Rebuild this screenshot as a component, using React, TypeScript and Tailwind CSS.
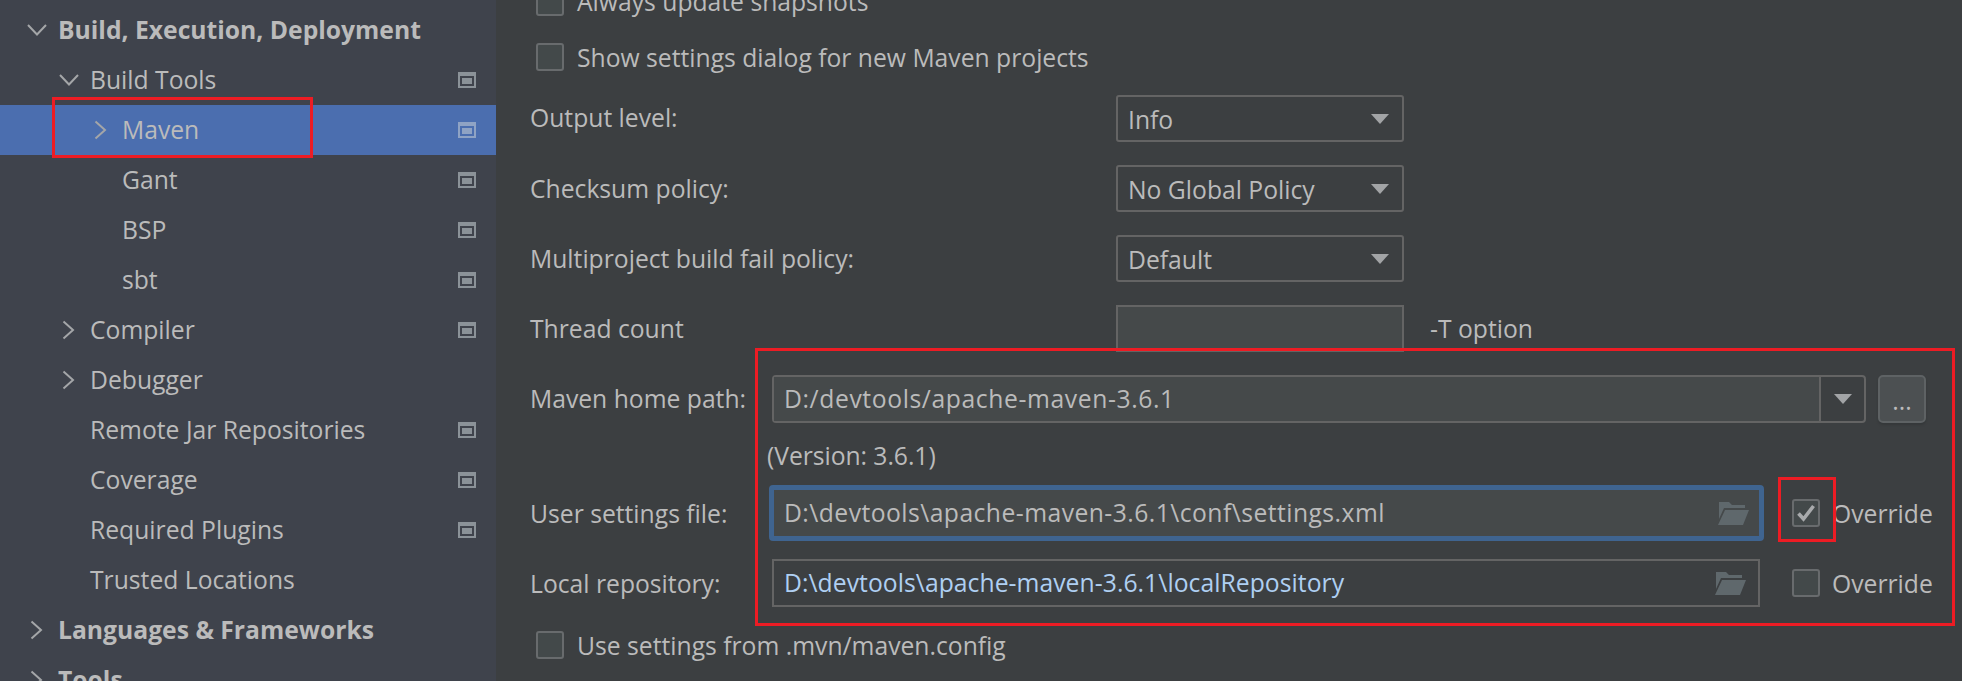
import React from "react";

type TreeRow = {
  label: string;
  level: number;
  bold?: boolean;
  arrow?: "open" | "closed";
  page?: boolean;
  selected?: boolean;
};

const rows: TreeRow[] = [
  { label: "Build, Execution, Deployment", level: 0, bold: true, arrow: "open" },
  { label: "Build Tools", level: 1, arrow: "open", page: true },
  { label: "Maven", level: 2, arrow: "closed", page: true, selected: true },
  { label: "Gant", level: 2, page: true },
  { label: "BSP", level: 2, page: true },
  { label: "sbt", level: 2, page: true },
  { label: "Compiler", level: 1, arrow: "closed", page: true },
  { label: "Debugger", level: 1, arrow: "closed" },
  { label: "Remote Jar Repositories", level: 1, page: true },
  { label: "Coverage", level: 1, page: true },
  { label: "Required Plugins", level: 1, page: true },
  { label: "Trusted Locations", level: 1 },
  { label: "Languages & Frameworks", level: 0, bold: true, arrow: "closed" },
  { label: "Tools", level: 0, bold: true, arrow: "closed" },
];

function Chevron({ open }: { open: boolean }) {
  return (
    <svg width="20" height="20" viewBox="0 0 20 20" fill="none" stroke="#a4a6a8" strokeWidth="2">
      {open ? <path d="M1 5l9 9.5L19 5" /> : <path d="M4.5 1.5L14 10l-9.5 8.5" />}
    </svg>
  );
}

function PageIcon({ selected }: { selected?: boolean }) {
  return (
    <svg width="18" height="16" viewBox="0 0 18 16" className="shrink-0">
      <rect x="0" y="0" width="18" height="16" fill={selected ? "#8fa3c4" : "#8b9298"} />
      <rect x="2" y="4" width="14" height="10" fill={selected ? "#4b6eaf" : "#3f434c"} />
      <rect x="4" y="6" width="10" height="6" fill={selected ? "#8fa3c4" : "#8b9298"} />
    </svg>
  );
}

function FolderIcon() {
  return (
    <svg width="31" height="23" viewBox="0 0 31 23" className="shrink-0">
      <path d="M1 0h10l3 3h13v3H6L1 17z" fill="#5f686c" />
      <path d="M7 8h24l-6 15H0z" fill="#5f686c" />
    </svg>
  );
}

function Caret({ color = "#a2a4a6" }: { color?: string }) {
  return (
    <svg width="18" height="10" viewBox="0 0 18 10" className="shrink-0">
      <path d="M0 0h18L9 10z" fill={color} />
    </svg>
  );
}

function Checkbox({ checked }: { checked?: boolean }) {
  return (
    <div className="w-7 h-7 shrink-0 rounded-[3px] border-2 border-[#686b6d] bg-[#43494a] flex items-center justify-center">
      {checked && (
        <svg width="20" height="18" viewBox="0 0 20 18" fill="none" stroke="#a8aaac" strokeWidth="3.6">
          <path d="M2.5 9.5l5 5.5L17.5 2" />
        </svg>
      )}
    </div>
  );
}

function Select({ value }: { value: string }) {
  return (
    <div className="w-[288px] h-[47px] rounded-[3px] border-2 border-[#646464] bg-[#3c3f41] flex items-center justify-between pl-[10px] pr-[13px]">
      <span className="mt-[2px]">{value}</span>
      <Caret />
    </div>
  );
}

export default function App() {
  return (
    <div
      className="w-[1962px] h-[681px] overflow-hidden relative flex bg-[#3c3f41] text-[#bbbbbb] text-[24.7px]"
      style={{ fontFamily: '"Open Sans", "Noto Sans", sans-serif' }}
    >
      <aside className="w-[496px] shrink-0 bg-[#3f434c] pt-[5px]">
        {rows.map((r) => (
          <div
            key={r.label}
            className={`h-[50px] flex items-center pr-5 ${r.selected ? "bg-[#4b6eaf]" : ""}`}
            style={{ paddingLeft: 27 + r.level * 32 }}
          >
            <span className="w-[31px] shrink-0">{r.arrow && <Chevron open={r.arrow === "open"} />}</span>
            <span className={`flex-1 ${r.bold ? "font-bold" : ""}`}>{r.label}</span>
            {r.page && <PageIcon selected={r.selected} />}
          </div>
        ))}
      </aside>

      <main className="flex-1 pl-[34px] -mt-3">
        <div className="h-7 flex items-center gap-[13px] pl-[6px]">
          <Checkbox />
          <span>Always update snapshots</span>
        </div>
        <div className="h-7 mt-[27px] flex items-center gap-[13px] pl-[6px]">
          <Checkbox />
          <span className="mt-[2px]">Show settings dialog for new Maven projects</span>
        </div>

        <div className="h-[47px] mt-6 flex items-center">
          <span className="w-[586px] mb-[2px]">Output level:</span>
          <Select value="Info" />
        </div>
        <div className="h-[47px] mt-[23px] flex items-center">
          <span className="w-[586px]">Checksum policy:</span>
          <Select value="No Global Policy" />
        </div>
        <div className="h-[47px] mt-[23px] flex items-center">
          <span className="w-[586px]">Multiproject build fail policy:</span>
          <Select value="Default" />
        </div>
        <div className="h-[47px] mt-[23px] flex items-center">
          <span className="w-[586px]">Thread count</span>
          <div className="w-[288px] h-[47px] border-2 border-[#646464] bg-[#45494a]" />
          <span className="ml-[26px]">-T option</span>
        </div>

        <div className="h-12 mt-[23px] flex items-center">
          <span className="w-[242px]">Maven home path:</span>
          <div className="w-[1094px] h-12 rounded-[4px] border-2 border-[#646464] flex items-stretch">
            <div className="flex-1 bg-[#45494a] border-r-2 border-[#646464] flex items-center pl-[10px] tracking-[0.6px]">
              D:/devtools/apache-maven-3.6.1
            </div>
            <div className="w-[43px] flex items-center justify-center">
              <Caret />
            </div>
          </div>
          <div className="w-12 h-12 ml-3 rounded-[5px] border-2 border-[#5e6264] bg-[#4c5052] flex items-center justify-center shadow-[0_2px_2px_#35383a]">
            <span className="mt-1">...</span>
          </div>
        </div>

        <div className="h-8 mt-[17px] pl-[237px] flex items-center tracking-[-0.05px]">(Version: 3.6.1)</div>

        <div className="h-[56px] mt-[13px] flex items-center">
          <span className="w-[239px] mt-[2px]">User settings file:</span>
          <div className="w-[995px] h-[56px] rounded-[4px] border-[5px] border-[#3f6490] bg-[#45494a] flex items-center justify-between pl-[10px] pr-[10px]">
            <span className="tracking-[0.45px]">D:\devtools\apache-maven-3.6.1\conf\settings.xml</span>
            <FolderIcon />
          </div>
          <div className="ml-7 mr-[12px]">
            <Checkbox checked />
          </div>
          <span className="mt-[2px]">Override</span>
        </div>

        <div className="h-12 mt-[18px] flex items-center">
          <span className="w-[242px] mt-[2px]">Local repository:</span>
          <div className="w-[988px] h-12 border-2 border-[#646464] bg-[#3c3f41] flex items-center justify-between pl-[10px] pr-3 text-[#afcff2]">
            <span className="tracking-[0.05px]">D:\devtools\apache-maven-3.6.1\localRepository</span>
            <FolderIcon />
          </div>
          <div className="ml-8 mr-[12px]">
            <Checkbox />
          </div>
          <span className="mt-[2px]">Override</span>
        </div>

        <div className="h-7 mt-6 flex items-center gap-[13px] pl-[6px]">
          <Checkbox />
          <span className="mt-[2px]">Use settings from .mvn/maven.config</span>
        </div>
      </main>

      {/* red annotation boxes drawn over the screenshot */}
      <div className="absolute left-[52px] top-[97px] w-[261px] h-[61px] border-[3px] border-[#ed1c24]" />
      <div className="absolute left-[755px] top-[348px] w-[1200px] h-[278px] border-[3px] border-[#ed1c24]" />
      <div className="absolute left-[1778px] top-[477px] w-[58px] h-[65px] border-[3px] border-[#ed1c24]" />
    </div>
  );
}
